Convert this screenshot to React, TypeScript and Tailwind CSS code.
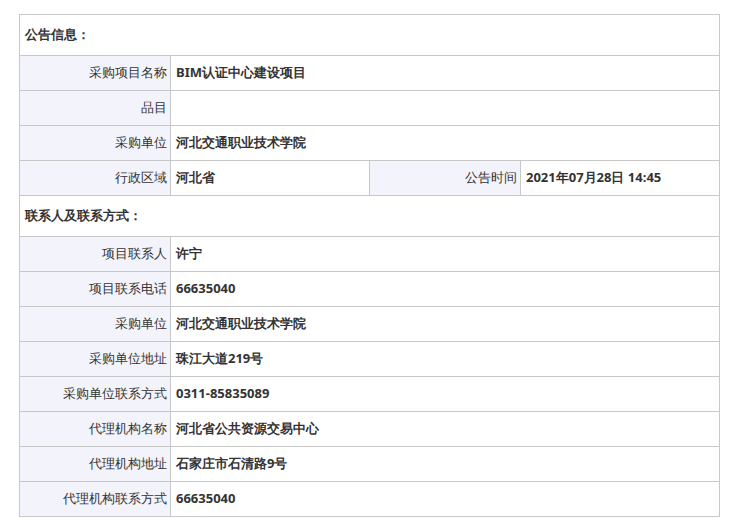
const rows1: [string, string][] = [
  ["采购项目名称", "BIM认证中心建设项目"],
  ["品目", ""],
  ["采购单位", "河北交通职业技术学院"],
];

const rows2: [string, string][] = [
  ["项目联系人", "许宁"],
  ["项目联系电话", "66635040"],
  ["采购单位", "河北交通职业技术学院"],
  ["采购单位地址", "珠江大道219号"],
  ["采购单位联系方式", "0311-85835089"],
  ["代理机构名称", "河北省公共资源交易中心"],
  ["代理机构地址", "石家庄市石清路9号"],
  ["代理机构联系方式", "66635040"],
];

const label = "h-[35px] w-[151px] border border-[#c8c8c8] bg-[#f3f3fb] pr-[3px] text-right font-normal";
const value = "h-[35px] border border-[#c8c8c8] bg-white pl-[5px] text-left font-bold";

const Section = ({ title }: { title: string }) => (
  <tr>
    <td colSpan={4} className="h-[41px] border border-[#c8c8c8] bg-white pl-[5px] font-bold">
      {title}
    </td>
  </tr>
);

export default function App() {
  return (
    <div className="min-h-screen bg-white pl-[19px] pt-[14px] text-[13px] text-[#333] [font-family:'Noto_Sans_CJK_SC',sans-serif]">
      <table className="w-[701px] border-collapse">
        <tbody>
          <Section title="公告信息：" />
          {rows1.map(([k, v]) => (
            <tr key={k}>
              <td className={label}>{k}</td>
              <td colSpan={3} className={value}>{v}</td>
            </tr>
          ))}
          <tr>
            <td className={label}>行政区域</td>
            <td className={`${value} w-[199px]`}>河北省</td>
            <td className={label}>公告时间</td>
            <td className={value}>2021年07月28日 14:45</td>
          </tr>
          <Section title="联系人及联系方式：" />
          {rows2.map(([k, v]) => (
            <tr key={k + v}>
              <td className={label}>{k}</td>
              <td colSpan={3} className={value}>{v}</td>
            </tr>
          ))}
        </tbody>
      </table>
    </div>
  );
}
